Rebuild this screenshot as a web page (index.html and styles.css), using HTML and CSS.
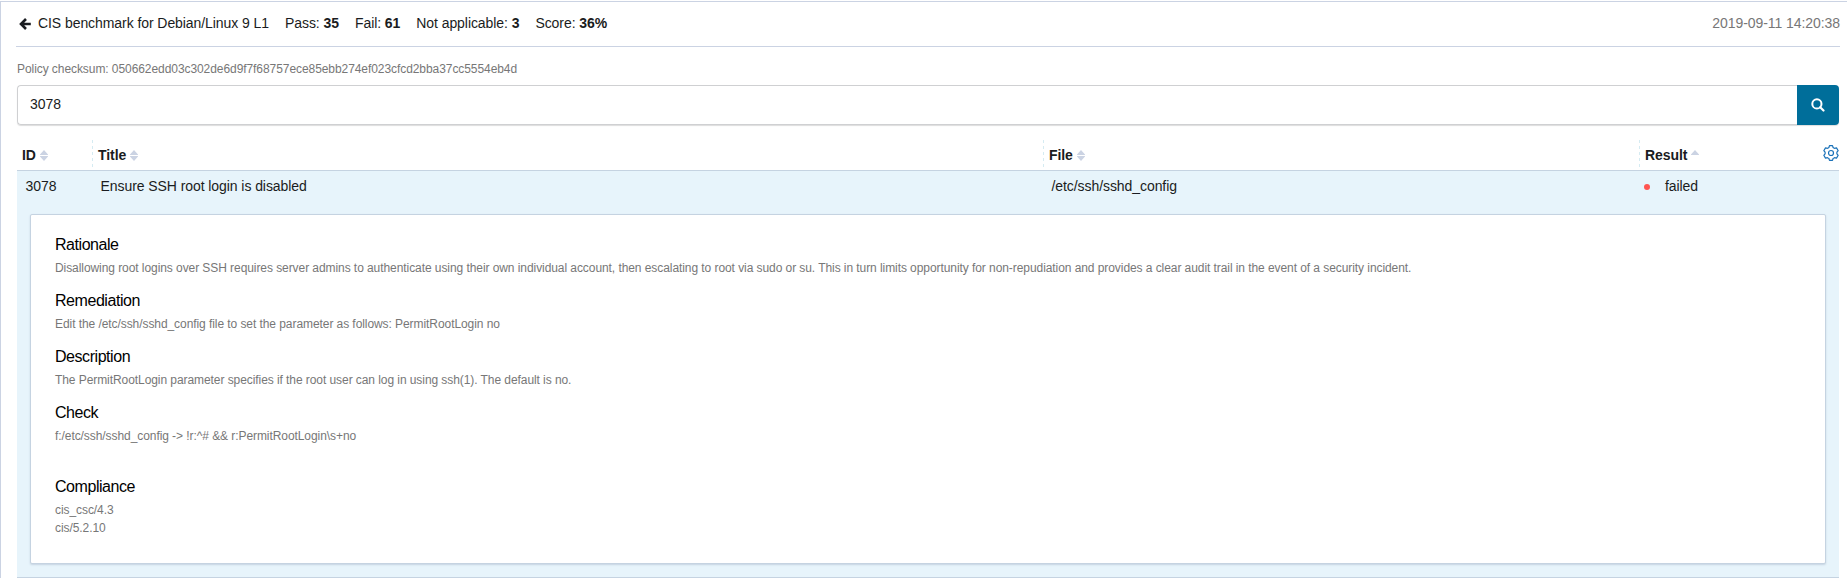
FILE: index.html
```html
<!DOCTYPE html>
<html lang="en">
<head>
<meta charset="utf-8">
<title>CIS benchmark for Debian/Linux 9 L1</title>
<link rel="stylesheet" href="styles.css">
</head>
<body>
<main class="panel">
  <header class="header">
    <svg class="back" viewBox="0 0 12 12" width="12" height="12"><path d="M7 1 2 6l5 5M2.200 6H11.800" fill="none" stroke="#1a1c21" stroke-width="2.600"/></svg>
    <h1 class="title">CIS benchmark for Debian/Linux 9 L1</h1>
    <span class="stat">Pass: <b>35</b></span>
    <span class="stat">Fail: <b>61</b></span>
    <span class="stat">Not applicable: <b>3</b></span>
    <span class="stat">Score: <b>36%</b></span>
    <time class="time">2019-09-11 14:20:38</time>
  </header>
  <section class="content">
    <p class="checksum">Policy checksum: 050662edd03c302de6d9f7f68757ece85ebb274ef023cfcd2bba37cc5554eb4d</p>
    <div class="search">
      <div class="field">3078</div>
      <div class="button"><svg viewBox="0 0 14 14" width="14" height="14"><circle cx="5.900" cy="5.900" r="4.600" fill="none" stroke="#fff" stroke-width="2"/><path d="m9.200 9.200 3.300 3.300" stroke="#fff" stroke-width="2.200" stroke-linecap="round"/></svg></div>
    </div>
    <div class="grid head">
      <div class="th">ID<svg class="sort" viewBox="0 0 8 11" width="8" height="11"><path d="M4 0 8 4.500V5H0v-.5zM0 6h8v.5L4 11 0 6.500z"/></svg></div>
      <div class="th">Title<svg class="sort" viewBox="0 0 8 11" width="8" height="11"><path d="M4 0 8 4.500V5H0v-.5zM0 6h8v.5L4 11 0 6.500z"/></svg></div>
      <div class="th">File<svg class="sort" viewBox="0 0 8 11" width="8" height="11"><path d="M4 0 8 4.500V5H0v-.5zM0 6h8v.5L4 11 0 6.500z"/></svg></div>
      <div class="th">Result<svg class="sort" viewBox="0 0 8 11" width="8" height="11"><path d="M4 0 8 4.500V5H0v-.5z"/></svg>
        <svg class="gear" viewBox="0 0 16 16" width="16" height="16"><path d="M6.500.6h3l.6 1.900q.7.500 1.400.8l2-.4 1.700 2.800L13.900 7.200v1.600l1.300 1.500-1.700 2.800-2-.4q-.7.300-1.400.8l-.6 1.900h-3l-.6-1.900q-.7-.5-1.400-.8l-2 .4L.8 10.300 2.100 8.800V7.200L.8 5.700l1.700-2.800 2 .4q.7-.3 1.400-.8z" fill="none" stroke="#1a71b8" stroke-width="1.200" stroke-linejoin="round"/><circle cx="8" cy="8" r="2.500" fill="none" stroke="#1a71b8" stroke-width="1.200"/></svg>
      </div>
    </div>
    <div class="expanded">
      <div class="grid row">
        <div class="td">3078</div>
        <div class="td">Ensure SSH root login is disabled</div>
        <div class="td">/etc/ssh/sshd_config</div>
        <div class="td result"><i class="dot"></i>failed</div>
      </div>
      <article class="card">
        <h2>Rationale</h2>
        <p>Disallowing root logins over SSH requires server admins to authenticate using their own individual account, then escalating to root via sudo or su. This in turn limits opportunity for non-repudiation and provides a clear audit trail in the event of a security incident.</p>
        <h2>Remediation</h2>
        <p>Edit the /etc/ssh/sshd_config file to set the parameter as follows: PermitRootLogin no</p>
        <h2>Description</h2>
        <p>The PermitRootLogin parameter specifies if the root user can log in using ssh(1). The default is no.</p>
        <h2>Check</h2>
        <p class="check">f:/etc/ssh/sshd_config -&gt; !r:^# &amp;&amp; r:PermitRootLogin\s+no</p>
        <h2>Compliance</h2>
        <p>cis_csc/4.3<br>cis/5.2.10</p>
      </article>
    </div>
  </section>
</main>
</body>
</html>
```
FILE: styles.css
```css
* { box-sizing: border-box; }
body { margin: 0; background: #fff; color: #1a1c21; font: 14px/20px "Liberation Sans", Arial, sans-serif; letter-spacing: -.07px; overflow: hidden; }
h1, h2, p { margin: 0; font-weight: 400; }
svg { display: block; flex: none; }
.panel { height: 577px; margin-top: 1px; border-top: 1px solid #cbd3e3; border-left: 1px solid #cbd3e3; padding-left: 15px; }
.header { width: 1824px; height: 45px; padding: 0 0 2px 3px; display: flex; align-items: center; border-bottom: 1px solid #cbd3e3; white-space: nowrap; }
.back { margin: 1px 7px 0 0; }
.title { font-size: 14px; }
.stat { margin-left: 16px; }
.time { margin-left: auto; color: #777; }
.content { width: 1822px; margin-left: 1px; }
.checksum { padding-top: 13px; font-size: 12px; line-height: 18px; color: #777; }
.search { margin-top: 7px; height: 40px; display: flex; border-radius: 4px; box-shadow: 0 1px 1px #ddd; }
.field { flex: 1; padding: 8px 12px; border: 1px solid #cfd0d2; border-right: 0; border-radius: 4px 0 0 4px; }
.button { width: 42px; display: flex; align-items: center; justify-content: center; background: #006e9a; border-radius: 0 4px 4px 0; }
.grid { display: grid; grid-template-columns: 75px 951px 596px 200px; }
.head { height: 46px; padding-top: 15px; border-bottom: 1px solid #c5d3e1; font-weight: 700; }
.th { display: flex; align-items: center; padding-left: 5px; }
.th + .th { background: repeating-linear-gradient(#d5ebf2 0 3px, transparent 3px 6px) left / 1px 100% no-repeat; padding-left: 6px; }
.sort { margin: 0 0 0 4px; fill: #cbd3e3; }
.gear { margin: 0 0 4px auto; }
.expanded { height: 407px; padding: 5px 13px 0; background: #e7f4fb; border-bottom: 1px solid #c5d3e1; }
.row { margin: 0 -13px; height: 38px; }
.td { padding-left: 8.500px; }
.result { display: flex; align-items: flex-start; padding-left: 5px; }
.dot { width: 6px; height: 6px; margin: 8px 15px 0 0; border-radius: 50%; background: #ff5551; }
.card { height: 350px; padding: 18px 24px; background: #fff; border: 1px solid #c5d3e1; border-radius: 2px; box-shadow: 0 1px 2px #c5d3e1; }
.card h2 { color: #000; font-size: 16px; line-height: 24px; letter-spacing: -.45px; }
.card p { margin: 2px 0 12px; color: #777; font-size: 12px; line-height: 18px; }
.card .check { margin-bottom: 30px; }
```
